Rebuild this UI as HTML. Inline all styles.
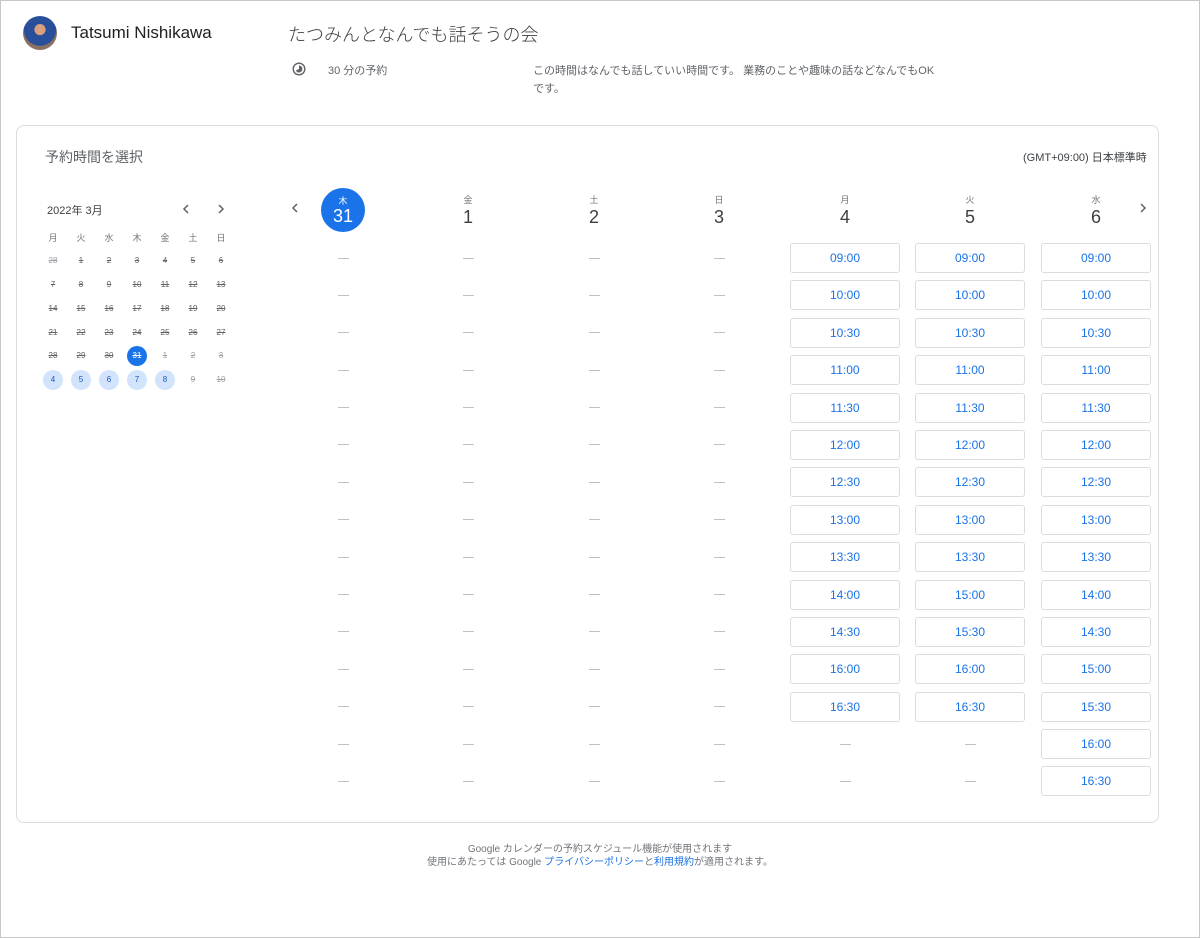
<!DOCTYPE html>
<html><head><meta charset="utf-8"><style>
*{margin:0;padding:0;box-sizing:border-box}
body{width:1200px;height:938px;background:#fff;font-family:"Liberation Sans","Noto Sans CJK JP",sans-serif;color:#3c4043;position:relative;overflow:hidden}
.frame{position:absolute;left:0;top:0;width:1200px;height:938px;border:1px solid #c8c8c8}
.a{position:absolute}
.card{position:absolute;left:16px;top:125px;width:1143px;height:698px;border:1px solid #dadce0;border-radius:8px}
.col{position:absolute;top:243px;width:110px}
.col div{height:30px;margin-bottom:7.4px;display:flex;align-items:center;justify-content:center;font-size:12px}
.col.b div{border:1px solid #dadce0;border-radius:3px;color:#1a73e8}
.col.d div span{display:block;width:11px;height:1px;background:#bdc1c6}
.mc{position:absolute;left:39px;width:196px;display:flex}
.mc span{width:28px;text-align:center;font-size:8px;height:20px;line-height:20px;color:#5f6368;text-decoration:line-through}
.mc.h span{text-decoration:none;color:#70757a;font-size:9px}
.mc span.g{color:#9aa0a6}
.mc span.s{display:inline-block;margin:0 4px;width:20px;border-radius:50%;background:#d2e3fc;color:#185abc;text-decoration:none}
.mc span.t{margin:0 4px;width:20px;border-radius:50%;background:#1a73e8;color:#fff}
.dh{position:absolute;top:193px;width:60px;text-align:center;color:#3c4043}
.dh small{display:block;font-size:9px;color:#70757a;height:14px}
.dh b{font-weight:400;font-size:18px}
</style></head><body>
<div class="frame"></div>
<div class="a" style="left:23px;top:16px;width:34px;height:34px;border-radius:50%;background:radial-gradient(circle at 50% 40%,#d9a080 0 20%,#2a4f9a 22% 60%,#8a7060 62%)"></div>
<div class="a" style="left:71px;top:23px;font-size:17px;color:#202124">Tatsumi Nishikawa</div>
<div class="a" style="left:288px;top:21px;font-size:18px;color:#3c4043;font-family:'Noto Sans CJK JP',sans-serif;font-weight:300">たつみんとなんでも話そうの会</div>
<svg class="a" style="left:292px;top:62px" width="14" height="14" viewBox="0 0 14 14"><circle cx="7" cy="7" r="5.8" fill="none" stroke="#5f6368" stroke-width="1.4"/><path d="M7 3.5 A3.5 3.5 0 1 1 3.8 8.5 L7 7Z" fill="#5f6368"/></svg>
<div class="a" style="left:328px;top:62px;font-size:11px;color:#5f6368">30 分の予約</div>
<div class="a" style="left:533px;top:62px;font-size:11px;color:#5f6368;line-height:18px;width:450px">この時間はなんでも話していい時間です。 業務のことや趣味の話などなんでもOK<br>です。</div>
<div class="card"></div>
<div class="a" style="left:45px;top:147px;font-size:14px;color:#5f6368">予約時間を選択</div>
<div class="a" style="left:1023px;top:149px;font-size:11px;color:#3c4043">(GMT+09:00) 日本標準時</div>
<div class="a" style="left:47px;top:202px;font-size:11px">2022年 3月</div>
<svg class="a" style="left:181px;top:203px" width="10" height="12" viewBox="0 0 10 12"><path d="M7 2 L3 6 L7 10" fill="none" stroke="#5f6368" stroke-width="1.5"/></svg>
<svg class="a" style="left:216px;top:203px" width="10" height="12" viewBox="0 0 10 12"><path d="M3 2 L7 6 L3 10" fill="none" stroke="#5f6368" stroke-width="1.5"/></svg>
<div class="mc h" style="top:228px"><span>月</span><span>火</span><span>水</span><span>木</span><span>金</span><span>土</span><span>日</span></div>
<div class="mc" style="top:251px"><span class="g">28</span><span>1</span><span>2</span><span>3</span><span>4</span><span>5</span><span>6</span></div>
<div class="mc" style="top:275px"><span>7</span><span>8</span><span>9</span><span>10</span><span>11</span><span>12</span><span>13</span></div>
<div class="mc" style="top:299px"><span>14</span><span>15</span><span>16</span><span>17</span><span>18</span><span>19</span><span>20</span></div>
<div class="mc" style="top:323px"><span>21</span><span>22</span><span>23</span><span>24</span><span>25</span><span>26</span><span>27</span></div>
<div class="mc" style="top:346px"><span>28</span><span>29</span><span>30</span><span class="t">31</span><span class="g">1</span><span class="g">2</span><span class="g">3</span></div>
<div class="mc" style="top:370px"><span class="s">4</span><span class="s">5</span><span class="s">6</span><span class="s">7</span><span class="s">8</span><span class="g">9</span><span class="g">10</span></div>
<svg class="a" style="left:290px;top:202px" width="10" height="12" viewBox="0 0 10 12"><path d="M7 2 L3 6 L7 10" fill="none" stroke="#5f6368" stroke-width="1.5"/></svg>
<svg class="a" style="left:1138px;top:202px" width="10" height="12" viewBox="0 0 10 12"><path d="M3 2 L7 6 L3 10" fill="none" stroke="#5f6368" stroke-width="1.5"/></svg>
<div class="a" style="left:321px;top:188px;width:44px;height:44px;border-radius:50%;background:#1a73e8;color:#fff;text-align:center"><div style="font-size:9px;margin-top:6px">木</div><div style="font-size:18px;line-height:18px">31</div></div>
<div class="dh" style="left:438px"><small>金</small><b>1</b></div>
<div class="dh" style="left:564px"><small>土</small><b>2</b></div>
<div class="dh" style="left:689px"><small>日</small><b>3</b></div>
<div class="dh" style="left:815px"><small>月</small><b>4</b></div>
<div class="dh" style="left:940px"><small>火</small><b>5</b></div>
<div class="dh" style="left:1066px"><small>水</small><b>6</b></div>
<div class="col d" style="left:288px"><div><span></span></div><div><span></span></div><div><span></span></div><div><span></span></div><div><span></span></div><div><span></span></div><div><span></span></div><div><span></span></div><div><span></span></div><div><span></span></div><div><span></span></div><div><span></span></div><div><span></span></div><div><span></span></div><div><span></span></div></div>
<div class="col d" style="left:413px"><div><span></span></div><div><span></span></div><div><span></span></div><div><span></span></div><div><span></span></div><div><span></span></div><div><span></span></div><div><span></span></div><div><span></span></div><div><span></span></div><div><span></span></div><div><span></span></div><div><span></span></div><div><span></span></div><div><span></span></div></div>
<div class="col d" style="left:539px"><div><span></span></div><div><span></span></div><div><span></span></div><div><span></span></div><div><span></span></div><div><span></span></div><div><span></span></div><div><span></span></div><div><span></span></div><div><span></span></div><div><span></span></div><div><span></span></div><div><span></span></div><div><span></span></div><div><span></span></div></div>
<div class="col d" style="left:664px"><div><span></span></div><div><span></span></div><div><span></span></div><div><span></span></div><div><span></span></div><div><span></span></div><div><span></span></div><div><span></span></div><div><span></span></div><div><span></span></div><div><span></span></div><div><span></span></div><div><span></span></div><div><span></span></div><div><span></span></div></div>
<div class="col b" style="left:790px"><div>09:00</div><div>10:00</div><div>10:30</div><div>11:00</div><div>11:30</div><div>12:00</div><div>12:30</div><div>13:00</div><div>13:30</div><div>14:00</div><div>14:30</div><div>16:00</div><div>16:30</div></div>
<div class="col d" style="left:790px;top:729.2px"><div><span></span></div><div><span></span></div></div>
<div class="col b" style="left:915px"><div>09:00</div><div>10:00</div><div>10:30</div><div>11:00</div><div>11:30</div><div>12:00</div><div>12:30</div><div>13:00</div><div>13:30</div><div>15:00</div><div>15:30</div><div>16:00</div><div>16:30</div></div>
<div class="col d" style="left:915px;top:729.2px"><div><span></span></div><div><span></span></div></div>
<div class="col b" style="left:1041px"><div>09:00</div><div>10:00</div><div>10:30</div><div>11:00</div><div>11:30</div><div>12:00</div><div>12:30</div><div>13:00</div><div>13:30</div><div>14:00</div><div>14:30</div><div>15:00</div><div>15:30</div><div>16:00</div><div>16:30</div></div>
<div class="a" style="left:0;width:1200px;top:843px;text-align:center;font-size:10px;color:#70757a;line-height:13px">Google カレンダーの予約スケジュール機能が使用されます<br>使用にあたっては Google <span style="color:#1a73e8">プライバシーポリシー</span>と<span style="color:#1a73e8">利用規約</span>が適用されます。</div>
</body></html>
